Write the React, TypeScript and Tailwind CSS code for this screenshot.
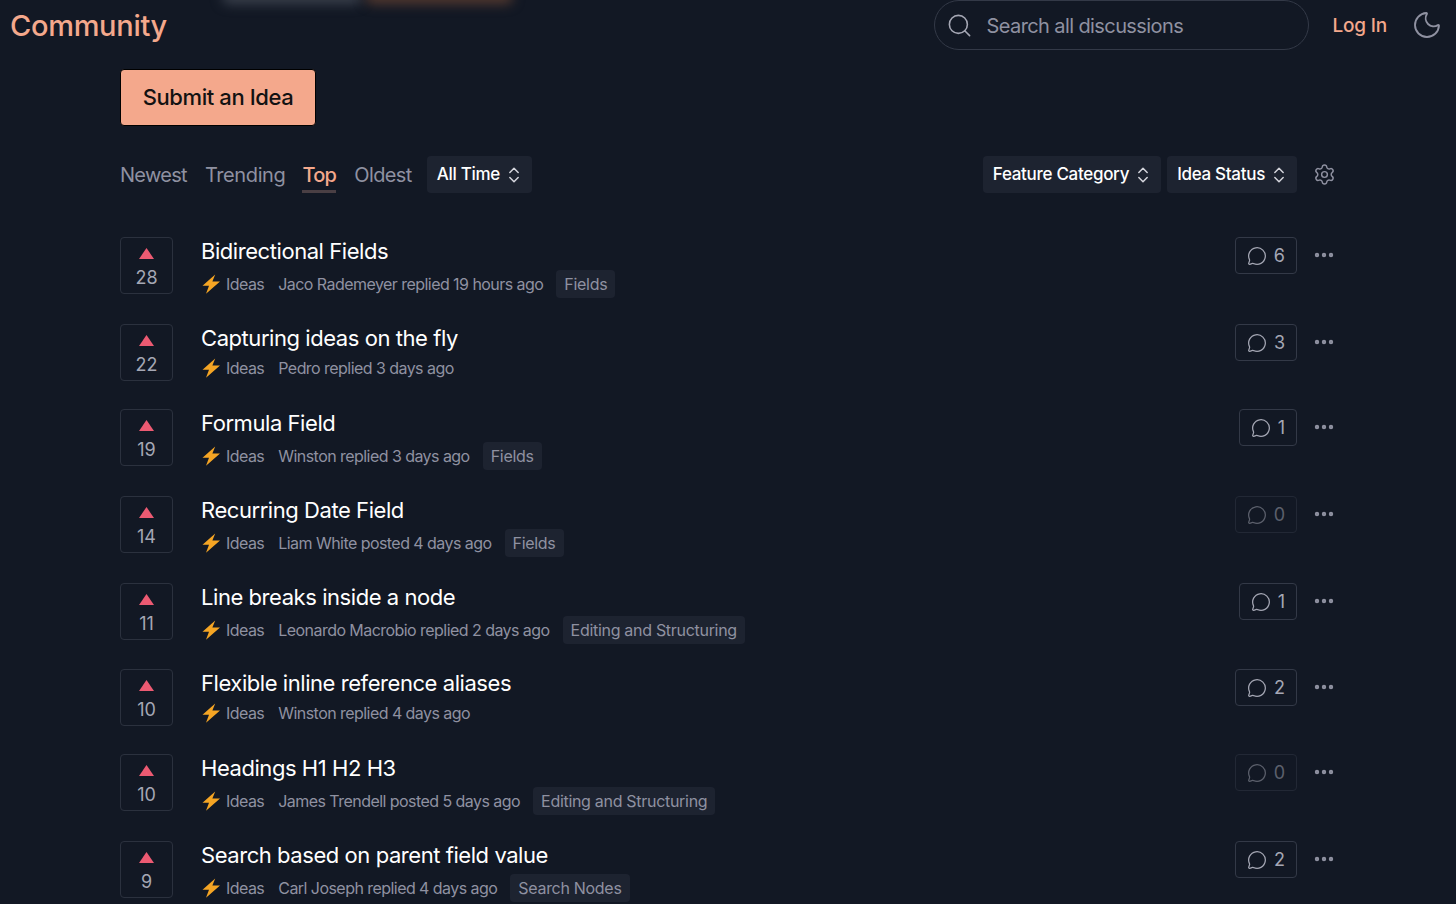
import { ChevronsUpDown, Ellipsis, MessageCircle, Moon, Search, Settings } from "lucide-react";

const ideas = [
  { votes: 28, title: "Bidirectional Fields", meta: "Jaco Rademeyer replied 19 hours ago", tag: "Fields", comments: 6 },
  { votes: 22, title: "Capturing ideas on the fly", meta: "Pedro replied 3 days ago", comments: 3 },
  { votes: 19, title: "Formula Field", meta: "Winston replied 3 days ago", tag: "Fields", comments: 1 },
  { votes: 14, title: "Recurring Date Field", meta: "Liam White posted 4 days ago", tag: "Fields", comments: 0 },
  { votes: 11, title: "Line breaks inside a node", meta: "Leonardo Macrobio replied 2 days ago", tag: "Editing and Structuring", comments: 1 },
  { votes: 10, title: "Flexible inline reference aliases", meta: "Winston replied 4 days ago", comments: 2 },
  { votes: 10, title: "Headings H1 H2 H3", meta: "James Trendell posted 5 days ago", tag: "Editing and Structuring", comments: 0 },
  { votes: 9, title: "Search based on parent field value", meta: "Carl Joseph replied 4 days ago", tag: "Search Nodes", comments: 2 },
];

const Bolt = () => (
  <svg width="20" height="20" viewBox="0 0 20 20" className="shrink-0">
    <path d="M14.2 0.5 L1.5 11.8 H8 L5 19.8 L19 7.4 H11.4 Z" fill="#f5a524" />
  </svg>
);

const Dropdown = ({ label }: { label: string }) => (
  <button className="flex h-[37px] items-center gap-[4px] rounded-[4px] bg-[#1d2330] pl-[10px] pr-[8px] text-[17px] font-medium tracking-[-0.3px] text-white">
    {label}
    <ChevronsUpDown size={20} strokeWidth={1.8} className="text-[#d4d5dc]" />
  </button>
);

export default function App() {
  return (
    <div className="relative h-[904px] overflow-hidden bg-[#121824] font-['Inter',sans-serif]">
      {/* Blurred strip at the top edge */}
      <div className="absolute left-[222px] top-[-10px] h-[14px] w-[140px] rounded-full bg-[#3a404c] blur-[6px]" />
      <div className="absolute left-[365px] top-[-10px] h-[14px] w-[148px] rounded-full bg-[#54392f] blur-[6px]" />

      {/* Header */}
      <header className="flex h-[50px] items-center pl-[10px] pr-[13px]">
        <span className="pt-[2px] text-[29px] font-medium tracking-[-0.3px] text-[#f4a88c]">Community</span>
        <div className="ml-auto flex h-[50px] w-[375px] items-center gap-[14px] rounded-full border border-[#333947] pl-[11px]">
          <Search size={27} strokeWidth={1.4} className="text-[#a5a7b4]" />
          <span className="pt-[1px] text-[20px] tracking-[-0.6px] text-[#8f91a1]">Search all discussions</span>
        </div>
        <span className="ml-[24px] pt-[2px] text-[19px] font-medium tracking-[-0.2px] text-[#f4a88c]">Log In</span>
        <Moon size={32} strokeWidth={1.4} className="ml-[24px] text-[#8f91a1]" />
      </header>

      <main className="pl-[120px] pr-[120px]">
        <button className="mt-[19px] flex h-[57px] w-[196px] items-center justify-center rounded-[4px] border border-black bg-[#f4a88c] text-[22px] font-medium tracking-[-0.4px] text-[#121212]">
          Submit an Idea
        </button>

        {/* Sort and filter bar */}
        <div className="mt-[30px] flex h-[37px] items-center text-[20px] tracking-[-0.4px] text-[#8f91a1]">
          <span className="tracking-[-0.7px]">Newest</span>
          <span className="ml-[18px]">Trending</span>
          <span className="relative ml-[17px] font-medium tracking-[-0.7px] text-[#f4a88c]">
            Top
            <span className="absolute left-0 right-0 top-[30px] h-[3px] bg-[#4a3f44]" />
          </span>
          <span className="ml-[18px] tracking-[-0.6px]">Oldest</span>
          <div className="ml-[15px]">
            <Dropdown label="All Time" />
          </div>
          <div className="ml-auto mr-[6px]">
            <Dropdown label="Feature Category" />
          </div>
          <Dropdown label="Idea Status" />
          <Settings size={23} strokeWidth={1.5} className="ml-[16px] text-[#8f91a1]" />
        </div>

        {/* Ideas list */}
        <div className="mt-[44px] flex flex-col">
          {ideas.map((idea, i) => (
            <div key={idea.title} className={`flex items-start ${i === 4 ? "pb-[25px]" : "pb-[26px]"}`}>
              <div className="flex h-[57px] w-[53px] shrink-0 flex-col items-center rounded-[4px] border border-[#2b313e] pt-[10px]">
                <svg width="15" height="11" viewBox="0 0 15 11">
                  <path d="M7.5 0 L15 11 H0 Z" fill="#ec5a72" />
                </svg>
                <span className="mt-[7px] text-[18px] leading-[24px] text-[#a5a7b4]">{idea.votes}</span>
              </div>

              <div className="ml-[28px] flex-1">
                <div className="-mt-[1px] text-[22px] leading-[30px] tracking-[-0.44px] text-white">{idea.title}</div>
                {idea.tag ? (
                  <div className="mt-[4px] flex h-[28px] items-center text-[16px] tracking-[-0.55px] text-[#8f91a1]">
                    <Bolt />
                    <span className="ml-[5px]">Ideas</span>
                    <span className="ml-[14px]">{idea.meta}</span>
                    <span className="ml-[13px] flex h-[28px] items-center rounded-[4px] bg-[#1d2330] px-[8px] tracking-[-0.3px]">{idea.tag}</span>
                  </div>
                ) : (
                  <div className="mb-[3px] mt-[3px] flex h-[24px] items-center text-[16px] tracking-[-0.55px] text-[#8f91a1]">
                    <Bolt />
                    <span className="ml-[5px]">Ideas</span>
                    <span className="ml-[14px]">{idea.meta}</span>
                  </div>
                )}
              </div>

              <div className={`flex h-[37px] items-center gap-[7px] rounded-[4px] border px-[11px] text-[18px] ${idea.comments === 0 ? "border-[#222835] text-[#5c606c]" : "border-[#333947] text-[#a5a7b4]"}`}>
                <MessageCircle size={20} strokeWidth={1.5} />
                {idea.comments}
              </div>
              <Ellipsis size={24} strokeWidth={2.4} className="ml-[15px] mt-[6px] text-[#8f91a1]" />
            </div>
          ))}
        </div>
      </main>
    </div>
  );
}
